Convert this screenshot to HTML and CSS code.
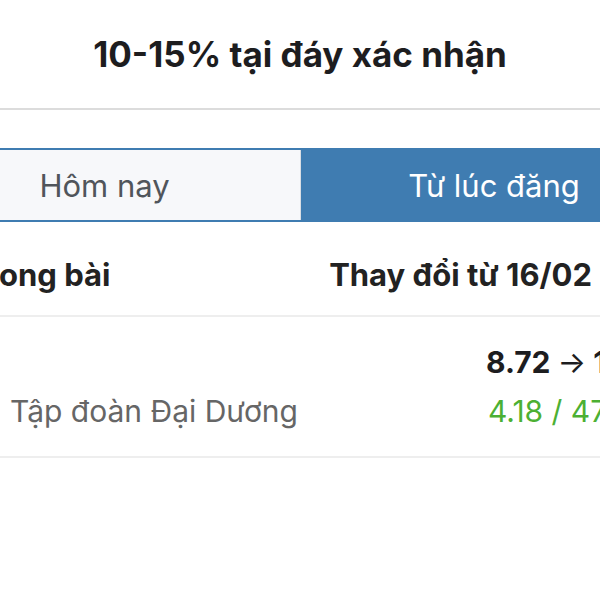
FILE: index.html
```html
<!DOCTYPE html>
<html lang="vi">
<head>
    <meta charset="UTF-8">
    <meta name="viewport" content="width=device-width, initial-scale=1.0">
    <title>Cổ phiếu trong bài</title>
    <link rel="stylesheet" href="styles.css">
</head>
<body>
    <div class="sheet">
        <div class="sheet-title">10-15% tại đáy xác nhận</div>

        <div class="tabs">
            <div class="tab">Hôm nay</div>
            <div class="tab tab-active">Từ lúc đăng</div>
        </div>

        <div class="table-head">
            <div class="col-name">ong bài</div>
            <div class="col-change">Thay đổi từ 16/02</div>
        </div>

        <div class="stock-row">
            <div class="stock-name"></div>
            <div class="stock-price">8.72 <span class="arrow">→</span> 12.90</div>
            <div class="stock-name">Tập đoàn Đại Dương</div>
            <div class="stock-diff">4.18 / 47.94%</div>
        </div>
    </div>
</body>
</html>
```

FILE: styles.css
```css
body {
    margin: 0;
    font-family: Inter, "Noto Sans", sans-serif;
    background: #fff;
    color: #1d1d1f;
    overflow: hidden;
}
.sheet {
    width: 600px;
    overflow: hidden;
}
.sheet-title {
    height: 108px;
    display: flex;
    align-items: center;
    justify-content: center;
    font-size: 35px;
    font-weight: 700;
    border-bottom: 2px solid #dcdcdc;
}
.tabs {
    display: grid;
    grid-template-columns: 391px 1fr;
    gap: 1px;
    width: 778px;
    margin: 38px 0 0 -91px;
    background: #d9dee4;
    border-top: 2px solid #3f7cb1;
    border-bottom: 2px solid #3f7cb1;
}
.tab {
    height: 70px;
    display: flex;
    align-items: center;
    justify-content: center;
    background: #f7f8fa;
    color: #50555b;
    font-size: 31px;
}
.tab-active {
    background: #3f7cb1;
    color: #fff;
}
.table-head {
    height: 81px;
    padding: 12px 8px 0 0;
    display: flex;
    align-items: center;
    justify-content: space-between;
    border-bottom: 2px solid #eeeeee;
    font-size: 31px;
    font-weight: 700;
    color: #222;
}
.col-name {
    margin-left: -1px;
}
.stock-row {
    display: grid;
    grid-template-columns: 486px 1fr;
    row-gap: 13px;
    padding: 27px 0 27px;
    border-bottom: 2px solid #eeeeee;
    font-size: 30px;
    line-height: 36px;
    white-space: nowrap;
}
.stock-name {
    padding-left: 10px;
    color: #666;
}
.stock-price {
    font-weight: 700;
    color: #1d1d1f;
}
.arrow {
    font-weight: 400;
}
.stock-diff {
    padding-left: 2px;
    color: #4cb033;
}
```
